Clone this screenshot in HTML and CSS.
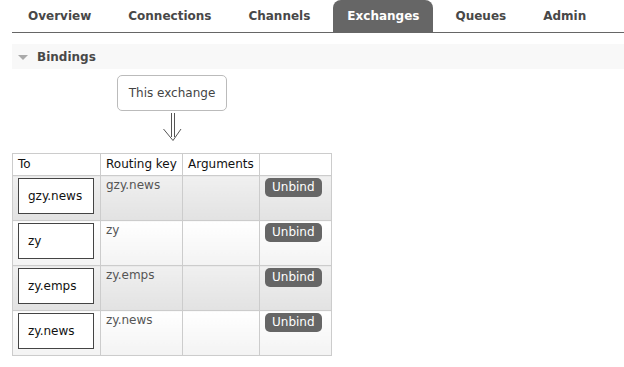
FILE: index.html
```html
<html lang="en"><head>
    <meta charset="UTF-8">
    <meta name="viewport" content="width=device-width, initial-scale=1.0">
    <title>Exchange bindings</title>
    <link rel="stylesheet" href="styles.css">
  </head>
  <body>
    <main class="page">
      <ul class="tabs">
        <li class="tab">Overview</li>
        <li class="tab">Connections</li>
        <li class="tab">Channels</li>
        <li class="tab selected">Exchanges</li>
        <li class="tab">Queues</li>
        <li class="tab">Admin</li>
      </ul>

      <section class="section">
        <h2 class="section-title"><span class="toggle"></span>Bindings</h2>
        <div class="bindings">
          <div class="this-exchange">This exchange</div>
          <svg class="arrow" width="20" height="30" viewBox="0 0 20 30">
            <path d="M9.5 1 V25 M12.5 1 V25 M1.5 17 L11 28.5 L19 17" fill="none" stroke="#555" stroke-width="1"/>
          </svg>
          <table class="list">
            <thead>
              <tr>
                <th class="col-to">To</th>
                <th class="col-key">Routing key</th>
                <th class="col-args">Arguments</th>
                <th class="col-action"></th>
              </tr>
            </thead>
            <tbody>
              <tr class="alt1">
                <td><span class="dest">gzy.news</span></td>
                <td class="key">gzy.news</td>
                <td></td>
                <td><button class="unbind">Unbind</button></td>
              </tr>
              <tr class="alt2">
                <td><span class="dest">zy</span></td>
                <td class="key">zy</td>
                <td></td>
                <td><button class="unbind">Unbind</button></td>
              </tr>
              <tr class="alt1">
                <td><span class="dest">zy.emps</span></td>
                <td class="key">zy.emps</td>
                <td></td>
                <td><button class="unbind">Unbind</button></td>
              </tr>
              <tr class="alt2">
                <td><span class="dest">zy.news</span></td>
                <td class="key">zy.news</td>
                <td></td>
                <td><button class="unbind">Unbind</button></td>
              </tr>
            </tbody>
          </table>
        </div>
      </section>
    </main>
  </body></html>
```

FILE: styles.css
```css
* {
    padding: 0;
    margin: 0;
    box-sizing: border-box;
    font-family: "DejaVu Sans", Verdana, sans-serif;
}
body {
    background: #fff;
    font-size: 12px;
    color: #222;
}
.page {
    padding-left: 12px;
}
.tabs {
    list-style: none;
    display: flex;
    gap: 7px;
    height: 33px;
    padding-left: 1px;
    border-bottom: 1px solid #666;
}
.tab {
    height: 32px;
    padding: 0 15px;
    display: flex;
    align-items: center;
    font-weight: bold;
    color: #484848;
    border-radius: 8px 8px 0 0;
}
.tab.selected {
    background: #666;
    color: #fff;
    padding: 0 14px;
    margin-left: 1px;
}
.section {
    margin-top: 11px;
}
.section-title {
    height: 25px;
    display: flex;
    align-items: center;
    font-size: 12px;
    font-weight: bold;
    color: #484848;
    background: #f8f8f8;
}
.toggle {
    width: 0;
    height: 0;
    margin: 1px 9px 0 6px;
    border-left: 5px solid transparent;
    border-right: 5px solid transparent;
    border-top: 5px solid #aaa;
}
.bindings {
    display: inline-flex;
    flex-direction: column;
    align-items: center;
    padding-top: 6px;
}
.this-exchange {
    height: 36px;
    padding: 0 11px;
    display: flex;
    align-items: center;
    border: 1px solid #bbb;
    border-radius: 5px;
    color: #444;
}
.arrow {
    display: block;
    margin: 1px 0 11px 0;
}
.list {
    border-collapse: collapse;
    table-layout: fixed;
    width: 319px;
    font-size: 12px;
}
.list th,
.list td {
    border: 1px solid #ccc;
    text-align: left;
    vertical-align: top;
    font-size: 12px;
    font-weight: normal;
    line-height: 15px;
    white-space: nowrap;
}
.list th {
    height: 22px;
    padding: 3px 5px;
    color: #111;
    background: #fff;
}
.col-to { width: 88px; }
.col-key { width: 82px; }
.col-args { width: 77px; }
.col-action { width: 72px; }
.list td {
    height: 45px;
    padding: 2px 5px 6px 5px;
}
.alt1 td {
    background: linear-gradient(#f0f0f0, #e2e2e2);
}
.alt2 td {
    background: linear-gradient(#fff, #f3f3f3);
}
.key {
    color: #555;
}
.dest {
    display: block;
    width: 76px;
    height: 36px;
    padding: 10px 0 0 9px;
    border: 1px solid #444;
    background: #fff;
    color: #111;
}
.unbind {
    height: 19px;
    padding: 0 7px;
    border: none;
    border-radius: 5px;
    background: #666;
    color: #fff;
    font-size: 12px;
    line-height: 19px;
}
```
